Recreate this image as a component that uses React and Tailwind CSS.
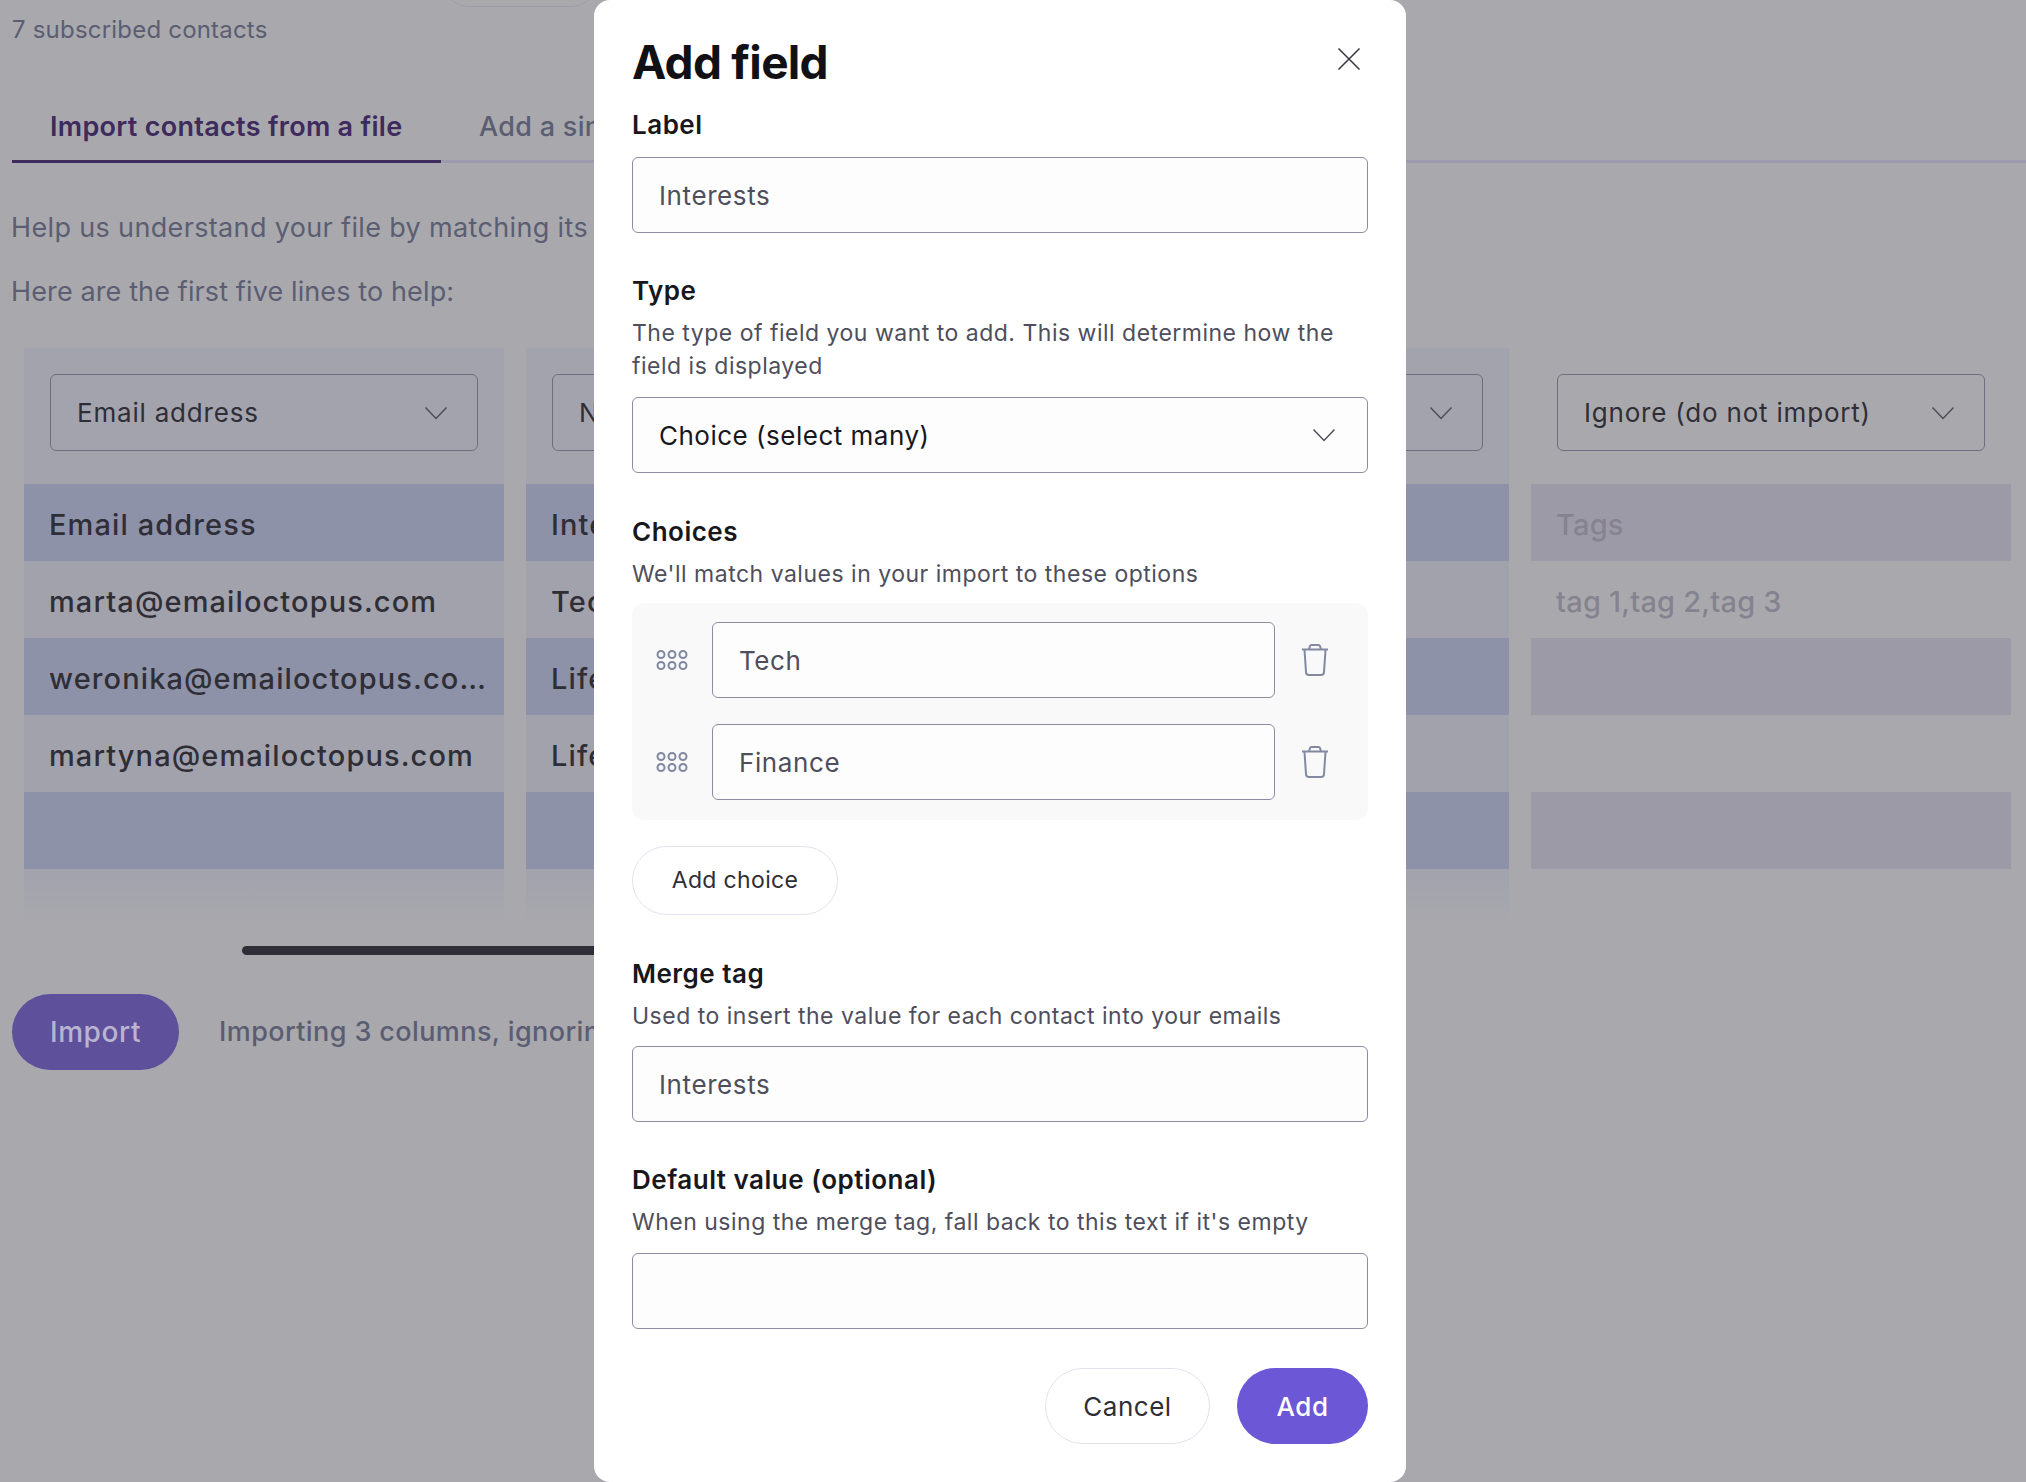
import React from 'react';

const inputBox = 'flex items-center rounded-[6px] border border-[#8e8ca4] bg-[#fdfdfd]';
const labelText = 'h-[30px] text-[26px] leading-[30px] font-semibold text-[#17171c] tracking-[0.5px]';
const helpText = 'text-[23px] leading-[33px] text-[#4e4e5c] tracking-[0.5px]';

const Chevron = ({ className = '' }) => (
  <svg width="24" height="14" viewBox="0 0 24 14" fill="none" className={className}>
    <path d="M1.5 1.5 12 12.5 22.5 1.5" stroke="currentColor" strokeWidth="1.4" />
  </svg>
);

const DragDots = () => (
  <svg width="32" height="20" viewBox="0 0 32 20" fill="none" className="text-[#8088a0]">
    {[5, 16, 27].map((x) => [4.5, 15.5].map((y) => (
      <circle key={`${x}-${y}`} cx={x} cy={y} r="3.5" stroke="currentColor" strokeWidth="2" />
    )))}
  </svg>
);

const TrashIcon = () => (
  <svg width="28" height="32" viewBox="0 0 28 32" fill="none" stroke="#8289a0" strokeWidth="2">
    <path d="M1 5.5h26" />
    <path d="M8 5.5 9 2a1.5 1.5 0 0 1 1.4-1h7.2A1.5 1.5 0 0 1 19 2l1 3.500" />
    <path d="M3.500 6 5 28a3 3 0 0 0 3 3h12a3 3 0 0 0 3-3l1.500-22" />
  </svg>
);

const CloseIcon = () => (
  <svg width="24" height="24" viewBox="0 0 24 24" fill="none" stroke="#3a3a46" strokeWidth="1.6">
    <path d="M1.500 1.500 22.500 22.500M22.500 1.500 1.500 22.500" />
  </svg>
);

const PageSelect = ({ label, className = '' }) => (
  <div className={`flex h-[77px] items-center justify-between rounded-[6px] border border-[#6f6d80] pl-[26px] pr-[29px] text-[26px] tracking-[0.8px] text-[#2f2e36] ${className}`}>
    <span className="whitespace-nowrap">{label}</span>
    <Chevron className="shrink-0 text-[#4b4b58]" />
  </div>
);

// one column of the file preview
const PreviewColumn = ({ width, select, rows, ignored = false }) => (
  <div className={`${width} shrink-0`}>
    <div className={`h-[136px] px-[26px] pt-[26px] ${ignored ? '' : 'bg-[#a3a3ae]'}`}>
      <PageSelect label={select} />
    </div>
    {rows.map((row, i) => (
      <div
        key={i}
        className={`flex h-[77px] items-center overflow-hidden pl-[25px] pr-[16px] pt-[4px] text-[29px] font-medium ${
          i % 2 === 0
            ? ignored ? 'bg-[#9d9aa8]' : 'bg-[#8d92a8]'
            : ignored ? '' : 'bg-[#a2a2ad]'
        } ${ignored ? 'tracking-[0.2px] text-[#85838f]' : 'tracking-[1.1px] text-[#2f2e36]'}`}
      >
        <span className="truncate">{row}</span>
      </div>
    ))}
    {!ignored && <div className="h-[65px] bg-gradient-to-b from-[#a2a2ad] to-[#a9a9ad]" />}
  </div>
);

const Field = ({ label, help, children, className = '', gap = 'mt-[14px]' }) => (
  <div className={className}>
    <div className={labelText}>{label}</div>
    {help && <div className={`mt-[11px] ${helpText}`}>{help}</div>}
    <div className={help ? gap : 'mt-[17px]'}>{children}</div>
  </div>
);

const TextBox = ({ value }) => (
  <div className={`${inputBox} h-[76px] px-[26px] text-[26px] text-[#4e4e5c] tracking-[0.6px]`}>{value}</div>
);

const ChoiceRow = ({ value }) => (
  <div className="flex items-center">
    <div className="ml-[24px] flex w-[56px] shrink-0 items-center">
      <DragDots />
    </div>
    <div className={`${inputBox} h-[76px] w-[563px] px-[26px] text-[26px] text-[#4e4e5c] tracking-[0.6px]`}>{value}</div>
    <div className="ml-[26px]">
      <TrashIcon />
    </div>
  </div>
);

export default function App() {
  return (
    <div className="relative h-[1482px] w-[2026px] overflow-hidden bg-[#a9a9ad] font-['Inter',sans-serif]">
      {/* Page behind the dialog */}
      <div className="flex h-[7px] items-end pl-[440px]">
        <div className="h-[60px] w-[160px] shrink-0 rounded-full border border-[#9c9ca8]" />
      </div>
      <div className="mt-[8px] pl-[12px] text-[24px] leading-[30px] tracking-[0.2px] text-[#5b5d72]">7 subscribed contacts</div>

      <div className="mt-[50px] ml-[12px] flex h-[68px] border-b-[3px] border-[#9c9aac]">
        <div className="-mb-[3px] h-[68px] w-[429px] border-b-[3px] border-[#3e2a5c] pl-[38px] pt-[15px] text-[27px] leading-[34px] font-semibold tracking-[0.3px] text-[#3e2a5c]">
          Import contacts from a file
        </div>
        <div className="ml-[38px] pt-[15px] text-[27px] leading-[34px] font-medium tracking-[0.3px] text-[#5b5d72]">Add a single contact</div>
      </div>

      <p className="mt-[48px] pl-[11px] text-[27px] leading-[34px] tracking-[0.35px] text-[#5b5d72]">
        Help us understand your file by matching its columns to your fields.
      </p>
      <p className="mt-[30px] pl-[11px] text-[27px] leading-[34px] tracking-[0.12px] text-[#5b5d72]">Here are the first five lines to help:</p>

      <div className="mt-[39px] ml-[24px] flex gap-[22px]">
        <PreviewColumn
          width="w-[480px]"
          select="Email address"
          rows={['Email address', 'marta@emailoctopus.com', 'weronika@emailoctopus.co...', 'martyna@emailoctopus.com', '']}
        />
        <PreviewColumn
          width="w-[480px]"
          select="Name"
          rows={['Interests', 'Tech', 'Lifestyle', 'Lifestyle', '']}
        />
        <PreviewColumn width="w-[481px]" select="First name" rows={['First name', '', '', '', '']} />
        <PreviewColumn width="w-[480px]" select="Ignore (do not import)" ignored rows={['Tags', 'tag 1,tag 2,tag 3', '', '', '']} />
      </div>

      <div className="mt-[12px] ml-[242px] h-[9px] w-[700px] rounded-full bg-[#2f2e36]" />

      <div className="mt-[39px] ml-[12px] flex items-center">
        <div className="flex h-[76px] w-[167px] items-center justify-center rounded-full bg-[#5e509b] text-[28px] font-medium tracking-[0.6px] text-[#b9b4cf]">Import</div>
        <div className="ml-[40px] whitespace-nowrap text-[27px] font-medium tracking-[0.4px] text-[#5b5d72]">Importing 3 columns, ignoring 1</div>
      </div>

      {/* Add field dialog */}
      <div className="absolute left-[594px] top-0 h-[1482px] w-[812px] rounded-[16px] bg-white px-[38px] pt-[38px]">
        <div className="flex h-[48px] items-center justify-between">
          <h2 className="text-[46px] leading-[48px] font-bold tracking-[-0.7px] text-[#111115]">Add field</h2>
          <div className="mr-[7px] -mt-[7px]">
            <CloseIcon />
          </div>
        </div>

        <Field label="Label" className="mt-[24px]">
          <TextBox value="Interests" />
        </Field>

        <Field
          label="Type"
          className="mt-[43px]"
          help={<>The type of field you want to add. This will determine how the<br />field is displayed</>}
        >
          <div className={`${inputBox} h-[76px] justify-between pl-[26px] pr-[31px] text-[26px] tracking-[0.5px] text-[#17171c]`}>
            <span>Choice (select many)</span>
            <Chevron className="text-[#4b4b58]" />
          </div>
        </Field>

        <Field label="Choices" className="mt-[44px]" help="We'll match values in your import to these options">
          <div className="-mt-[2px] rounded-[12px] bg-[#f9f9f9] pt-[19px] pb-[20px]">
            <div className="flex flex-col gap-[26px]">
              <ChoiceRow value="Tech" />
              <ChoiceRow value="Finance" />
            </div>
          </div>
        </Field>

        <div className="mt-[26px] flex h-[69px] w-[206px] items-center justify-center rounded-full border border-[#e3e1ef] text-[23px] tracking-[0.35px] text-[#2f2e36]">
          Add choice
        </div>

        <Field label="Merge tag" className="mt-[44px]" gap="mt-[13px]" help="Used to insert the value for each contact into your emails">
          <TextBox value="Interests" />
        </Field>

        <Field label="Default value (optional)" className="mt-[43px]" help="When using the merge tag, fall back to this text if it's empty">
          <TextBox value="" />
        </Field>

        <div className="mt-[39px] flex justify-end gap-[27px]">
          <div className="flex h-[76px] w-[165px] items-center justify-center rounded-full border border-[#e3e1ef] text-[26px] tracking-[0.5px] text-[#2f2e36]">Cancel</div>
          <div className="flex h-[76px] w-[131px] items-center justify-center rounded-full bg-[#6c57d6] text-[26px] font-medium tracking-[0.6px] text-white">Add</div>
        </div>
      </div>
    </div>
  );
}
